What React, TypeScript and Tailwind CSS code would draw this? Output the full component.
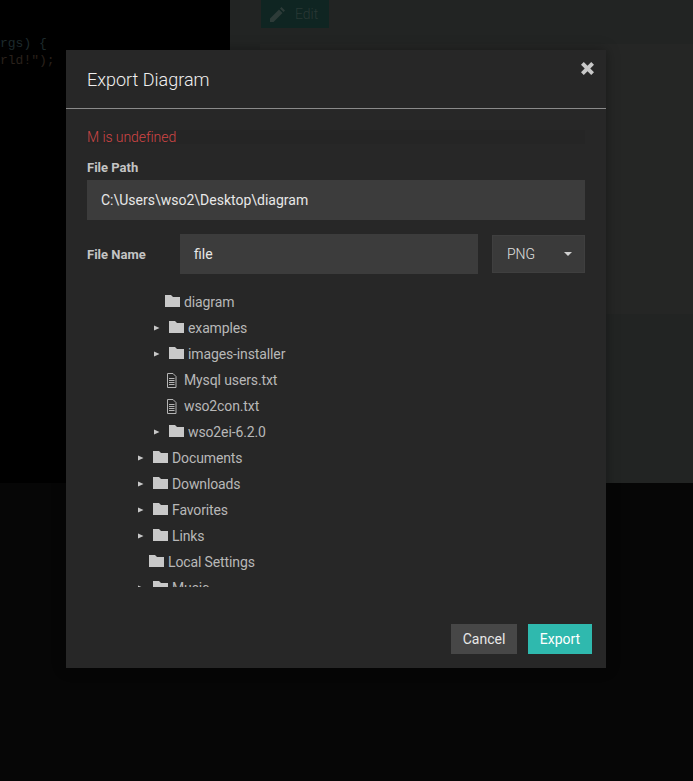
function Folder({ className = '' }: { className?: string }) {
  return (
    <svg width="15" height="12" viewBox="0 0 15 12" className={className}>
      <path d="M0 0H6L8 2H15V12H0Z" fill="#c8c8c8" />
    </svg>
  );
}

function FileIcon() {
  return (
    <svg width="11" height="15" viewBox="0 0 11 15" fill="none" stroke="#b4b4b4" strokeWidth="1">
      <path d="M1.5 .5H7L10 3.5V14.5H1.5Z" />
      <path d="M3 5.5H8.5M3 7.5H8.5M3 9.5H8.5M3 11.5H8.5" />
    </svg>
  );
}

function Caret() {
  return (
    <svg width="6" height="6" viewBox="0 0 6 6" className="shrink-0">
      <path d="M0 .5L5.5 3L0 5.5Z" fill="#c8c8c8" />
    </svg>
  );
}

type Row = { name: string; left: number; kind: 'folder' | 'file'; caret?: boolean };

const rows: Row[] = [
  { name: 'diagram', left: 165, kind: 'folder' },
  { name: 'examples', left: 169, kind: 'folder', caret: true },
  { name: 'images-installer', left: 169, kind: 'folder', caret: true },
  { name: 'Mysql users.txt', left: 166, kind: 'file' },
  { name: 'wso2con.txt', left: 166, kind: 'file' },
  { name: 'wso2ei-6.2.0', left: 169, kind: 'folder', caret: true },
  { name: 'Documents', left: 153, kind: 'folder', caret: true },
  { name: 'Downloads', left: 153, kind: 'folder', caret: true },
  { name: 'Favorites', left: 153, kind: 'folder', caret: true },
  { name: 'Links', left: 153, kind: 'folder', caret: true },
  { name: 'Local Settings', left: 149, kind: 'folder' },
  { name: 'Music', left: 153, kind: 'folder', caret: true },
];

function TreeRow({ row }: { row: Row }) {
  // tree starts at x=87 in the dialog
  return (
    <div className="relative h-[26px] text-[14px] tracking-[-0.12px] text-[#b8b8b8]">
      {row.caret && (
        <span className="absolute top-[10px]" style={{ left: row.left - 87 - 15 }}>
          <Caret />
        </span>
      )}
      <div className="flex h-full items-center" style={{ paddingLeft: row.left - 87 }}>
        {row.kind === 'folder' ? <Folder className="shrink-0 -translate-y-px" /> : <FileIcon />}
        <span className={row.kind === 'folder' ? 'ml-[4px]' : 'ml-[7px]'}>{row.name}</span>
      </div>
    </div>
  );
}

export default function App() {
  return (
    <div className="relative h-[781px] w-[693px] overflow-hidden bg-[#060606] font-['Roboto',sans-serif]">
      {/* dimmed page behind the dialog */}
      <div className="flex h-[483px]">
        <div className="w-[230px] bg-black pt-[35px] font-['Liberation_Mono',monospace] text-[13px] leading-[17px]">
          <div className="text-[#1d2a2c]">rgs) {'{'}</div>
          <div className="text-[#2a211b]">rld!");</div>
        </div>
        <div className="flex-1 bg-[#222423]">
          <div className="ml-[31px] flex h-[28px] w-[68px] items-center gap-[10px] bg-[#0f2522] pl-[9px] text-[14px] font-light text-[#2a3835]">
            <svg width="15" height="15" viewBox="0 0 15 15">
              <path d="M0 15V11.5L9 2.5L12.5 6L3.5 15ZM10 1.5L11.5 0L15 3.5L13.5 5Z" fill="#2d3b38" />
            </svg>
            Edit
          </div>
          <div className="mt-[16px] ml-[30px] h-[270px] bg-[#252625]" />
        </div>
      </div>

      <div className="absolute top-[50px] left-[66px] flex h-[618px] w-[540px] flex-col bg-[#272727] shadow-[0_0_12px_rgba(0,0,0,0.35)]">
        <div className="relative h-[59px] border-b border-[#8a8a8a] pt-[18px] pl-[21px] text-[18px] leading-[24px] font-light text-[#f0f0f0]">
          Export Diagram
          <button className="absolute top-[12px] right-[12px]">
            <svg width="13" height="13" viewBox="0 0 14 14" className="block">
              <path d="M3 0L7 4L11 0L14 3L10 7L14 11L11 14L7 10L3 14L0 11L4 7L0 3Z" fill="#c8c8c8" />
            </svg>
          </button>
        </div>

        <div className="flex flex-1 flex-col px-[21px]">
          <div className="mt-[21px] h-[14px] bg-[#252525] text-[14px] leading-[14px] font-light tracking-[-0.07px] text-[#d04545]">
            M is undefined
          </div>
          <label className="mt-[16px] block text-[13px] leading-[16px] font-bold text-[#c4c4c4]">File Path</label>
          <div className="mt-[4px] flex h-[40px] items-center bg-[#3c3c3c] pl-[14px] text-[14px] text-[#e8e8e8]">
            C:\Users\wso2\Desktop\diagram
          </div>
          <div className="mt-[14px] flex items-center">
            <label className="w-[93px] translate-y-px text-[13px] font-bold text-[#c4c4c4]">File Name</label>
            <div className="flex h-[40px] w-[298px] items-center bg-[#3c3c3c] pl-[14px] text-[14px] text-[#e8e8e8]">
              file
            </div>
            <div className="ml-[14px] flex h-[38px] flex-1 items-center justify-between border border-[#3f3f3f] bg-[#3a3a3a] pr-[12px] pl-[14px] text-[14px] font-light text-[#e0e0e0]">
              PNG
              <span className="h-0 w-0 border-x-[4px] border-t-[4px] border-x-transparent border-t-[#d0d0d0]" />
            </div>
          </div>

          <div className="mt-[15px] h-[298px] overflow-hidden">
            {rows.map((r) => (
              <TreeRow key={r.name} row={r} />
            ))}
          </div>

          <div className="mt-[37px] mr-[-7px] flex justify-end gap-[11px]">
            <button className="h-[30px] w-[66px] bg-[#474747] text-[14px] text-[#e8e8e8]">Cancel</button>
            <button className="h-[30px] w-[64px] bg-[#2fb9ae] text-[14px] text-white">Export</button>
          </div>
        </div>
      </div>
    </div>
  );
}
